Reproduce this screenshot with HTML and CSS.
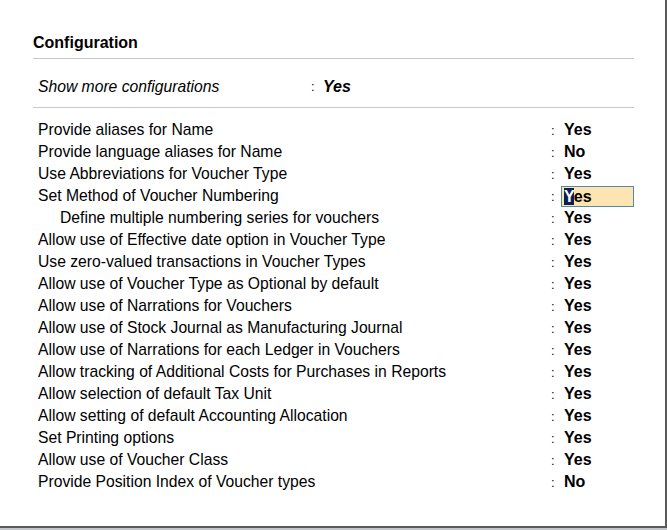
FILE: index.html
```html
<!DOCTYPE html>
<html lang="en">

<head>
    <meta charset="UTF-8">
    <title>Configuration</title>
    <link rel="stylesheet" href="styles.css">
</head>

<body>
    <div class="panel">
        <h2 class="title">Configuration</h2>
        <div class="more">
            <span class="label">Show more configurations</span>
            <span class="colon">:</span>
            <span class="value">Yes</span>
        </div>
        <div class="list">
            <div class="row"><span class="label">Provide aliases for Name</span><span class="colon">:</span><span class="value">Yes</span></div>
            <div class="row"><span class="label">Provide language aliases for Name</span><span class="colon">:</span><span class="value">No</span></div>
            <div class="row"><span class="label">Use Abbreviations for Voucher Type</span><span class="colon">:</span><span class="value">Yes</span></div>
            <div class="row"><span class="label">Set Method of Voucher Numbering</span><span class="colon">:</span><span class="value active"><span class="cursor">Y</span>es</span></div>
            <div class="row sub"><span class="label">Define multiple numbering series for vouchers</span><span class="colon">:</span><span class="value">Yes</span></div>
            <div class="row"><span class="label">Allow use of Effective date option in Voucher Type</span><span class="colon">:</span><span class="value">Yes</span></div>
            <div class="row"><span class="label">Use zero-valued transactions in Voucher Types</span><span class="colon">:</span><span class="value">Yes</span></div>
            <div class="row"><span class="label">Allow use of Voucher Type as Optional by default</span><span class="colon">:</span><span class="value">Yes</span></div>
            <div class="row"><span class="label">Allow use of Narrations for Vouchers</span><span class="colon">:</span><span class="value">Yes</span></div>
            <div class="row"><span class="label">Allow use of Stock Journal as Manufacturing Journal</span><span class="colon">:</span><span class="value">Yes</span></div>
            <div class="row"><span class="label">Allow use of Narrations for each Ledger in Vouchers</span><span class="colon">:</span><span class="value">Yes</span></div>
            <div class="row"><span class="label">Allow tracking of Additional Costs for Purchases in Reports</span><span class="colon">:</span><span class="value">Yes</span></div>
            <div class="row"><span class="label">Allow selection of default Tax Unit</span><span class="colon">:</span><span class="value">Yes</span></div>
            <div class="row"><span class="label">Allow setting of default Accounting Allocation</span><span class="colon">:</span><span class="value">Yes</span></div>
            <div class="row"><span class="label">Set Printing options</span><span class="colon">:</span><span class="value">Yes</span></div>
            <div class="row"><span class="label">Allow use of Voucher Class</span><span class="colon">:</span><span class="value">Yes</span></div>
            <div class="row"><span class="label">Provide Position Index of Voucher types</span><span class="colon">:</span><span class="value">No</span></div>
        </div>
    </div>
</body>

</html>
```

FILE: styles.css
```css
* {
    margin: 0;
    padding: 0;
    box-sizing: border-box;
}

body {
    background-color: #c3c6ca;
    font-family: "Liberation Sans", Arial, sans-serif;
    color: #000;
    height: 530px;
    overflow: hidden;
}

.panel {
    width: 667px;
    height: 528px;
    background-color: #fff;
    border-right: 2px solid #5a5a5a;
    border-bottom: 2px solid #5a5a5a;
    padding: 33px 0 0 33px;
}

.title {
    font-size: 16px;
    font-weight: bold;
    line-height: 20px;
    width: 601px;
    padding-bottom: 5px;
    border-bottom: 1px solid #c8c8c8;
}

.more {
    display: flex;
    width: 601px;
    height: 49px;
    align-items: flex-start;
    padding: 18px 0 0 5px;
    border-bottom: 1px solid #c8c8c8;
    font-size: 15.7px;
    line-height: 20px;
}

.more .label {
    font-style: italic;
    width: 273px;
}

.more .colon {
    width: 12px;
    font-size: 13px;
}

.more .value {
    font-weight: bold;
    font-style: italic;
    font-size: 16px;
}

.list {
    padding: 11px 0 0 5px;
}

.row {
    display: flex;
    align-items: center;
    height: 22px;
    font-size: 15.7px;
}

.row .label {
    width: 513px;
}

.row.sub .label {
    padding-left: 22px;
}

.row .colon {
    width: 13px;
    font-size: 13px;
}

.row .value {
    font-weight: bold;
    font-size: 16px;
}

.value.active {
    width: 73px;
    height: 21px;
    line-height: 19px;
    margin-left: -3px;
    padding-left: 2px;
    background-color: #fde4b0;
    border: 1px solid #4f8c9e;
}

.cursor {
    background-color: #0b1f55;
    color: #fff;
}
```
